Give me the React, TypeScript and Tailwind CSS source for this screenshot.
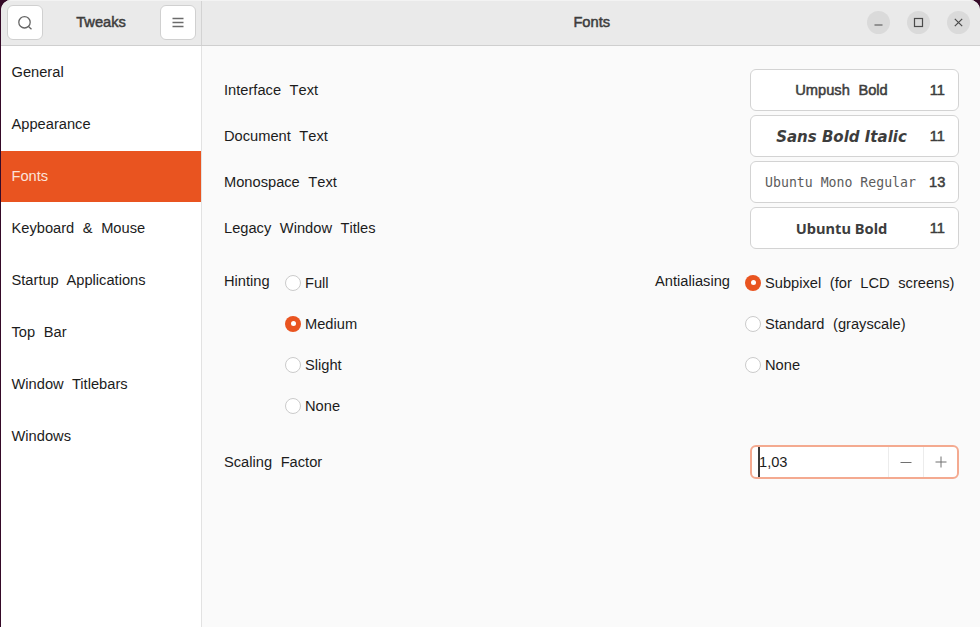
import React from "react";

const sidebarItems = [
  "General",
  "Appearance",
  "Fonts",
  "Keyboard & Mouse",
  "Startup Applications",
  "Top Bar",
  "Window Titlebars",
  "Windows",
];

const boldUi = "[-webkit-text-stroke:0.5px_currentColor]";

type FontRow = { label: string; name: string; nameClass: string; size: string };

const fontRows: FontRow[] = [
  { label: "Interface Text", name: "Umpush Bold", nameClass: boldUi, size: "11" },
  {
    label: "Document Text",
    name: "Sans Bold Italic",
    nameClass: "pt-px font-['DejaVu_Sans',sans-serif] text-[15px] font-bold italic [word-spacing:0px]",
    size: "11",
  },
  {
    label: "Monospace Text",
    name: "Ubuntu Mono Regular",
    nameClass: "pt-[2px] pr-[2px] font-['DejaVu_Sans_Mono',monospace] text-[13.2px] text-[#5c5c5c] [word-spacing:0px]",
    size: "13",
  },
  {
    label: "Legacy Window Titles",
    name: "Ubuntu Bold",
    nameClass: "pb-px font-['Noto_Sans',sans-serif] text-[14.67px] font-bold [word-spacing:0px]",
    size: "11",
  },
];

function Radio({ label, checked = false }: { label: string; checked?: boolean }) {
  return (
    <div className="flex h-[41px] items-center">
      <span
        className={
          checked
            ? "flex size-4 items-center justify-center rounded-full bg-[#e95420]"
            : "size-4 rounded-full border border-[#cbcbcb] bg-white"
        }
      >
        {checked && <span className="size-[5px] rounded-full bg-white" />}
      </span>
      <span className="ml-1 pt-px">{label}</span>
    </div>
  );
}

function WindowButton({ children }: { children: React.ReactNode }) {
  return (
    <div className="flex size-[23px] items-center justify-center rounded-full bg-[#dadada]">
      <svg width="11" height="11" viewBox="0 0 11 11" fill="none" stroke="#4a4a4a" strokeWidth="1.2">
        {children}
      </svg>
    </div>
  );
}

export default function App() {
  return (
    <div className="h-[627px] w-[980px] overflow-hidden bg-[#350a28] pl-px font-['Liberation_Sans',Arial,sans-serif] text-[14.67px] leading-[18px] whitespace-nowrap text-[#1c1c1c] [word-spacing:4.5px]">
      <div className="flex h-full flex-col overflow-hidden rounded-tl-[10px] rounded-tr-[10px] bg-[#fafafa]">
        <header className="flex h-[46px] shrink-0 border-t border-b border-t-[#f3f3f3] border-b-[#cfcfcf] bg-[#eaeaea] text-[#3d3d3d]">
          <div className="flex w-[201px] shrink-0 items-start justify-between border-r border-[#d3d3d3] pt-1 pr-[5px] pl-[6px]">
            <div className="flex h-[35px] w-9 items-center justify-center rounded-md border border-[#d0d0d0] bg-white">
              <svg width="16" height="16" viewBox="0 0 16 16" fill="none" stroke="#666" strokeWidth="1.3">
                <circle cx="7.5" cy="7.3" r="5.7" />
                <path d="M11.2 11.2 L14.5 14.2" />
              </svg>
            </div>
            <span className={"mt-[8px] mr-px " + boldUi}>Tweaks</span>
            <div className="flex h-[35px] w-9 items-center justify-center rounded-md border border-[#d0d0d0] bg-white">
              <svg width="12" height="12" viewBox="0 0 12 12" fill="none" stroke="#6b6b6b" strokeWidth="1.3">
                <path d="M0.5 1.5H11.5M0.5 5.5H11.5M0.5 9.5H11.5" />
              </svg>
            </div>
          </div>
          <div className="flex flex-1 items-start">
            <span className="w-[108px]" />
            <span className={"mt-[12px] flex-1 text-center " + boldUi}>Fonts</span>
            <div className="mt-[10px] mr-[10.5px] -ml-[7px] flex gap-[17px]">
              <WindowButton>
                <path d="M1.5 8H9.5" />
              </WindowButton>
              <WindowButton>
                <rect x="1.5" y="1.5" width="8" height="8" />
              </WindowButton>
              <WindowButton>
                <path d="M1.8 1.8L9.2 9.2M9.2 1.8L1.8 9.2" />
              </WindowButton>
            </div>
          </div>
        </header>

        <div className="flex min-h-0 flex-1">
          <nav className="w-[201px] shrink-0 border-r border-[#e2e2e2] bg-white pt-[0.6px]">
            {sidebarItems.map((item) => (
              <div key={item} className="h-[52px]">
                <div
                  className={
                    item === "Fonts"
                      ? "flex h-[51px] items-center bg-[#e95420] pb-px pl-[10.5px] text-[#fbe3da]"
                      : "flex h-[51px] items-center pb-px pl-[10.5px]"
                  }
                >
                  {item}
                </div>
              </div>
            ))}
          </nav>

          <main className="flex-1 pt-[23px] pr-[21px] pl-[22px]">
            <div className="flex flex-col gap-1">
              {fontRows.map((row) => (
                <div key={row.label} className="flex h-[42px] items-center justify-between">
                  <span className="[font-kerning:none]">{row.label}</span>
                  <div className="flex h-full w-[209px] items-center rounded-md border border-[#d3d3d3] bg-white text-[#3d3d3d]">
                    <span className={"ml-[13.5px] w-[154px] text-center " + row.nameClass}>{row.name}</span>
                    <span className={"flex-1 pr-[2px] text-center " + boldUi}>{row.size}</span>
                  </div>
                </div>
              ))}
            </div>

            <div className="mt-[13px] flex">
              <span className="w-[61px] pt-[10px]">Hinting</span>
              <div>
                <Radio label="Full" />
                <Radio label="Medium" checked />
                <Radio label="Slight" />
                <Radio label="None" />
              </div>
              <div className="ml-auto flex w-[304px]">
                <span className="w-[90px] pt-[10px]">Antialiasing</span>
                <div>
                  <Radio label="Subpixel (for LCD screens)" checked />
                  <Radio label="Standard (grayscale)" />
                  <Radio label="None" />
                </div>
              </div>
            </div>

            <div className="mt-[19px] flex h-[34px] items-center justify-between">
              <span>Scaling Factor</span>
              <div className="flex h-full w-[209px] items-stretch overflow-hidden rounded-md border-2 border-[#f4aa90] bg-white">
                <div className="flex flex-1 items-center pl-[6px]">
                  <span className="h-full w-[2px] bg-[#3a3a3a]" />
                  <span className="-ml-px">1,03</span>
                </div>
                <div className="flex w-[35px] items-center justify-center border-l border-[#ececec]">
                  <svg width="12" height="12" viewBox="0 0 12 12" stroke="#707070">
                    <path d="M0.5 6.5H11.5" />
                  </svg>
                </div>
                <div className="flex w-[34px] items-center justify-center border-l border-[#ececec]">
                  <svg width="12" height="12" viewBox="0 0 12 12" stroke="#707070">
                    <path d="M0.5 6H11.5M6 0.5V11.5" />
                  </svg>
                </div>
              </div>
            </div>
          </main>
        </div>
      </div>
    </div>
  );
}
